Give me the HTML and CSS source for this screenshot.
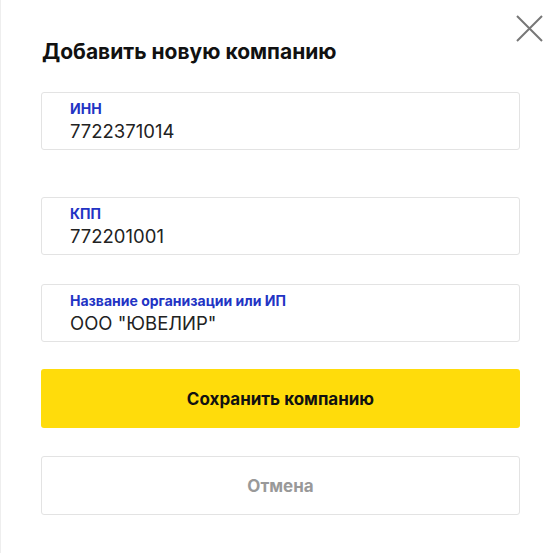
FILE: index.html
```html
<!DOCTYPE html>
<html lang="ru">
<head>
<meta charset="utf-8">
<title>Добавить новую компанию</title>
<link rel="stylesheet" href="styles.css">
</head>
<body>
<div class="modal">
  <button class="close" aria-label="Закрыть">
    <svg width="27" height="27" viewBox="0 0 27 27"><path d="M1 1L26 26M26 1L1 26" stroke="#777" stroke-width="2" fill="none"/></svg>
  </button>
  <h1 class="title">Добавить новую компанию</h1>
  <div class="field field-inn">
    <div class="label">ИНН</div>
    <div class="value">7722371014</div>
  </div>
  <div class="field field-kpp">
    <div class="label">КПП</div>
    <div class="value">772201001</div>
  </div>
  <div class="field field-name">
    <div class="label">Название организации или ИП</div>
    <div class="value">ООО "ЮВЕЛИР"</div>
  </div>
  <button class="btn btn-save">Сохранить компанию</button>
  <button class="btn btn-cancel">Отмена</button>
</div>
</body>
</html>
```

FILE: styles.css
```css
html, body {
  margin: 0;
  padding: 0;
  background: #fff;
}
body {
  font-family: Inter, Roboto, "Liberation Sans", sans-serif;
  color: #222;
}
.modal {
  position: relative;
  box-sizing: border-box;
  width: 559px;
  height: 553px;
  border-left: 1px solid #eeeeee;
  padding: 40px 39px 0 40px;
  display: flex;
  flex-direction: column;
}
.close {
  position: absolute;
  top: 14px;
  right: 15px;
  width: 29px;
  height: 29px;
  padding: 1px;
  border: 0;
  background: none;
}
.close svg { display: block; }
.title {
  margin: 0 0 28px 1px;
  font-size: 21px;
  line-height: 24px;
  font-weight: 700;
  color: #111;
}
.field {
  box-sizing: border-box;
  height: 58px;
  border: 1px solid #e3e3e3;
  border-radius: 3px;
  padding: 7px 28px 0;
}
.field-kpp { margin-top: 47px; }
.field-name { margin-top: 29px; }
.label {
  font-size: 14px;
  line-height: 18px;
  font-weight: 700;
  color: #2233c4;
}
.value {
  margin-top: 2px;
  font-size: 18.5px;
  line-height: 22px;
  color: #222;
}
.btn {
  box-sizing: border-box;
  height: 59px;
  width: 100%;
  border-radius: 3px;
  font-family: Inter, Roboto, "Liberation Sans", sans-serif;
  font-size: 17px;
  font-weight: 700;
  cursor: pointer;
}
.btn-save {
  margin-top: 27px;
  background: #ffdc0b;
  border: 0;
  color: #111;
}
.btn-cancel {
  margin-top: 28px;
  background: #fff;
  border: 1px solid #e3e3e3;
  color: #999;
}
```
